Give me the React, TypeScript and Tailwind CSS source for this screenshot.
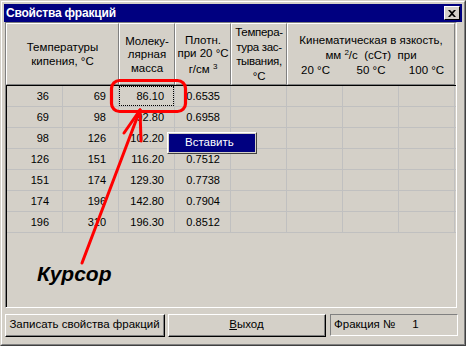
import React from "react";

const rows: string[][] = [
  ["36", "69", "86.10", "0.6535"],
  ["69", "98", "92.80", "0.6958"],
  ["98", "126", "102.20", ""],
  ["126", "151", "116.20", "0.7512"],
  ["151", "174", "129.30", "0.7738"],
  ["174", "196", "142.80", "0.7904"],
  ["196", "310", "196.30", "0.8512"],
];

const padR = ["pr-[13px]", "pr-[12px]", "pr-[10px]", "pr-[10px]", "pr-[10px]", "pr-[10px]", "pr-[10px]", "pr-[10px]"];

export default function App() {
  return (
    <div className="relative w-[469px] h-[348px] bg-white overflow-hidden font-['Liberation_Sans',Arial,sans-serif] text-black">
      <div className="w-[466px] h-[346px] border border-t-[#d4d0c8] border-l-[#d4d0c8] border-r-[#404040] border-b-[#404040]">
        <div className="w-full h-full border border-t-white border-l-white border-r-[#808080] border-b-[#808080] bg-[#d4d0c8] p-[2px] flex flex-col">
          {/* Title bar */}
          <div className="h-[18px] bg-[#000080] flex items-center justify-between pl-[2px] pr-[2px]">
            <span className="text-white font-bold text-[12px] leading-none tracking-[-0.2px]">Свойства фракций</span>
            <div className="w-[16px] h-[14px] bg-[#d4d0c8] border border-t-white border-l-white border-r-black border-b-black flex items-center justify-center">
              <svg width="8" height="7" viewBox="0 0 8 7">
                <path d="M0 0 L2 0 L4 2 L6 0 L8 0 L5 3.5 L8 7 L6 7 L4 5 L2 7 L0 7 L3 3.5 Z" fill="black" />
              </svg>
            </div>
          </div>

          {/* Panel */}
          <div className="ml-[1px] mt-0 w-[452px] h-[286px] border border-t-[#808080] border-l-[#808080] border-r-white border-b-white flex flex-col">
            {/* Header */}
            <div className="h-[62px] flex text-[11.5px] leading-[14px]">
              <div className="w-[113px] border border-t-white border-l-white border-r-[#808080] border-b-[#808080] flex flex-col items-center justify-center text-center">
                <div>Температуры</div>
                <div>кипения, °C</div>
              </div>
              <div className="w-[56px] border border-t-white border-l-white border-r-[#808080] border-b-[#808080] flex flex-col items-center justify-center text-center leading-[13.5px] pt-[2px]">
                <div>Молеку-</div>
                <div>лярная</div>
                <div>масса</div>
              </div>
              <div className="w-[56px] border border-t-white border-l-white border-r-[#808080] border-b-[#808080] flex flex-col items-center justify-center text-center leading-[13px] pt-[2px]">
                <div>Плотн.</div>
                <div>при 20 °C</div>
                <div className="mt-[3px]">г/см <sup className="text-[8px]">3</sup></div>
              </div>
              <div className="w-[56px] border border-t-white border-l-white border-r-[#808080] border-b-[#808080] flex flex-col items-center justify-center text-center leading-[14.5px] tracking-[-0.3px]">
                <div>Темпера-</div>
                <div>тура зас-</div>
                <div>тывания,</div>
                <div>°C</div>
              </div>
              <div className="w-[168px] border border-t-white border-l-white border-r-[#808080] border-b-[#808080] flex flex-col justify-center leading-[15px] pt-[3px]">
                <div className="text-center">Кинематическая в язкость,</div>
                <div className="text-center whitespace-pre">мм <sup className="text-[8px]">2</sup>/с  (сСт)  при</div>
                <div className="flex">
                  <div className="w-[55px] text-center">20 °C</div>
                  <div className="w-[56px] text-center">50 °C</div>
                  <div className="w-[55px] text-center">100 °C</div>
                </div>
              </div>
            </div>
            {/* Data */}
            <div className="flex-1 border-t border-l border-black">
              {rows.map((r, i) => (
                <div key={i} className="h-[21px] flex border-b border-[#c0c0c0] text-[11px]">
                  {Array.from({ length: 8 }).map((_, j) => (
                    <div key={j} className="w-[56px] h-full border-r border-[#c0c0c0]">
                      <div
                        className={
                          "h-full flex items-center justify-end " +
                          padR[j] +
                          (i === 0 && j === 2 ? " outline-1 outline-dotted outline-black -outline-offset-1" : "")
                        }
                      >
                        {j < 4 ? r[j] : ""}
                      </div>
                    </div>
                  ))}
                </div>
              ))}
            </div>
          </div>

          {/* Buttons */}
          <div className="mt-[6px] ml-[1px] flex h-[23px] text-[11.5px]">
            <div className="w-[160px] h-full border border-t-white border-l-white border-r-black border-b-black">
              <div className="w-full h-full border-r border-b border-[#808080] flex items-center justify-center">
                Записать свойства фракций
              </div>
            </div>
            <div className="ml-[3px] w-[158px] h-full border border-t-white border-l-white border-r-black border-b-black">
              <div className="w-full h-full border-r border-b border-[#808080] flex items-center justify-center">
                <span><span className="underline">В</span>ыход</span>
              </div>
            </div>
            <div className="ml-[4px] w-[128px] h-[22px] border border-t-[#808080] border-l-[#808080] border-r-white border-b-white flex items-center pl-[3px]">
              <span>Фракция №</span>
              <span className="ml-[17px]">1</span>
            </div>
          </div>
        </div>
      </div>

      {/* Context menu */}
      <div className="absolute left-[167px] top-[132px] w-[90px] h-[22px] bg-[#d4d0c8] border border-t-white border-l-white border-r-[#404040] border-b-[#404040] p-[1px]">
        <div className="w-full h-full bg-[#000080] text-white text-[11.5px] flex items-center pl-[16px]">Вставить</div>
      </div>

      {/* Red annotations */}
      <svg className="absolute left-0 top-0 pointer-events-none" width="469" height="348" viewBox="0 0 469 348">
        <rect x="111.5" y="80.5" width="74" height="31" rx="8" ry="8" fill="none" stroke="#ff0000" strokeWidth="3.2" />
        <path d="M82 263 L140 110" stroke="#ff0000" strokeWidth="3" strokeLinecap="round" fill="none" />
        <path d="M140 110 L124 133" stroke="#ff0000" strokeWidth="3" strokeLinecap="round" fill="none" />
        <path d="M140 110 L141 141" stroke="#ff0000" strokeWidth="3" strokeLinecap="round" fill="none" />
      </svg>

      <div className="absolute left-[37px] top-[260px] text-[21px] leading-[28px] font-bold italic">Курсор</div>
    </div>
  );
}
